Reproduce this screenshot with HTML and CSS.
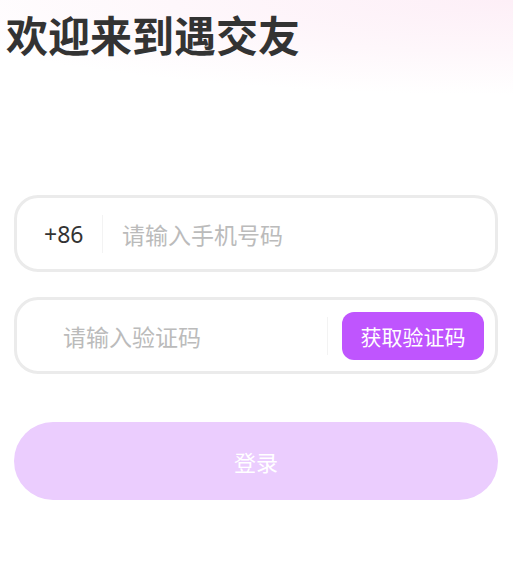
FILE: index.html
```html
<!DOCTYPE html>
<html lang="zh-CN">
<head>
<meta charset="utf-8">
<link rel="stylesheet" href="styles.css">
</head>
<body>
<div class="page">
  <div class="header">
    <h1 class="title">欢迎来到遇交友</h1>
  </div>
  <div class="form">
    <div class="field field-phone">
      <span class="prefix">+86</span>
      <span class="divider"></span>
      <span class="placeholder">请输入手机号码</span>
    </div>
    <div class="field field-code">
      <span class="placeholder code-ph">请输入验证码</span>
      <span class="divider"></span>
      <span class="code-btn">获取验证码</span>
    </div>
    <div class="login">登录</div>
  </div>
</div>
</body>
</html>
```
FILE: styles.css
```css
html, body {
  margin: 0;
  padding: 0;
  background: #fff;
}
body {
  font-family: "Noto Sans", "Noto Sans CJK SC", sans-serif;
  width: 513px;
  height: 562px;
  overflow: hidden;
}
.page {
  height: 562px;
  background: radial-gradient(ellipse 620px 95px at 100% 0, #fdeff7 0%, #fef7fb 55%, #ffffff 100%);
}
.header {
  padding: 10px 0 0 6px;
  height: 183px;
  box-sizing: border-box;
}
.title {
  margin: 0;
  font-family: "Noto Sans CJK SC", sans-serif;
  font-size: 42px;
  line-height: 48px;
  font-weight: 700;
  color: #333;
}
.form {
  padding: 12px 15px 0 14px;
  display: flex;
  flex-direction: column;
}
.field {
  height: 77px;
  box-sizing: border-box;
  border: 3px solid #ebebeb;
  border-radius: 24px;
  display: flex;
  align-items: center;
  background: #fff;
}
.field-code {
  margin-top: 25px;
  padding: 0 11px 0 46px;
}
.field-phone {
  padding-left: 27px;
}
.prefix {
  font-size: 23px;
  color: #333;
  width: 58px;
}
.divider {
  width: 1px;
  height: 38px;
  background: #f3f3f3;
}
.placeholder {
  font-family: "Noto Sans CJK SC", sans-serif;
  font-size: 23px;
  color: #bbbbbb;
  margin-left: 19px;
}
.code-ph {
  margin-left: 0;
  flex: 1;
}
.code-btn {
  margin-left: 14px;
  width: 142px;
  height: 48px;
  border-radius: 12px;
  background: #bf55fe;
  color: #fff;
  font-family: "Noto Sans CJK SC", sans-serif;
  font-size: 21px;
  display: flex;
  align-items: center;
  justify-content: center;
}
.login {
  margin-top: 48px;
  height: 78px;
  border-radius: 39px;
  background: #ebcdfe;
  color: #fff;
  font-family: "Noto Sans CJK SC", sans-serif;
  font-size: 22px;
  display: flex;
  align-items: center;
  justify-content: center;
}
```
